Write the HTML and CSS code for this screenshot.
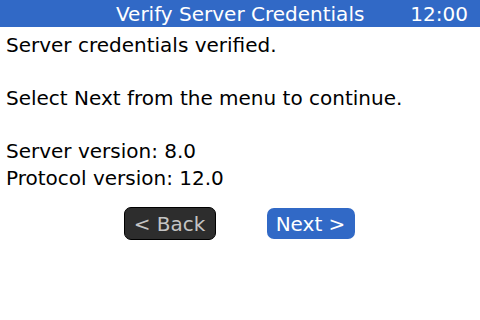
FILE: index.html
```html
<!DOCTYPE html>
<html lang="en">
<head>
    <meta charset="UTF-8">
    <title>Verify Server Credentials</title>
    <link rel="stylesheet" href="styles.css">
</head>
<body>
    <div class="title-bar">
        <span class="title">Verify Server Credentials</span>
        <span class="clock">12:00</span>
    </div>
    <div class="content">
        <p>Server credentials verified.</p>
        <p class="gap">Select Next from the menu to continue.</p>
        <p class="gap">Server version: 8.0</p>
        <p>Protocol version: 12.0</p>
        <div class="buttons">
            <button class="back">&lt; Back</button>
            <button class="next">Next &gt;</button>
        </div>
    </div>
</body>
</html>
```

FILE: styles.css
```css
body {
    margin: 0;
    width: 480px;
    height: 320px;
    background: #fff;
    font-family: "DejaVu Sans", sans-serif;
    font-size: 20px;
    color: #000;
    overflow: hidden;
}
.title-bar {
    height: 27px;
    background-color: #3169c6;
    color: #fff;
    display: flex;
    align-items: center;
    justify-content: flex-end;
    padding-right: 12px;
}
.title {
    margin-right: 46px;
}
.content {
    padding: 5px 6px 0;
}
.content p {
    margin: 0;
    line-height: 26.5px;
}
.content p.gap {
    margin-top: 26.5px;
}
.buttons {
    display: flex;
    justify-content: center;
    gap: 51px;
    margin-top: 16px;
    padding-right: 2px;
}
button {
    font-family: "DejaVu Sans", sans-serif;
    font-size: 20px;
    border-radius: 7px;
    height: 33px;
    padding: 0;
    cursor: pointer;
}
button.back {
    width: 92px;
    background-color: #2d2d2d;
    border: 1px solid #000;
    color: #c4c4c4;
}
button.next {
    width: 88px;
    height: 31px;
    margin-top: 1px;
    background-color: #3169c6;
    border: none;
    color: #fff;
}
```
